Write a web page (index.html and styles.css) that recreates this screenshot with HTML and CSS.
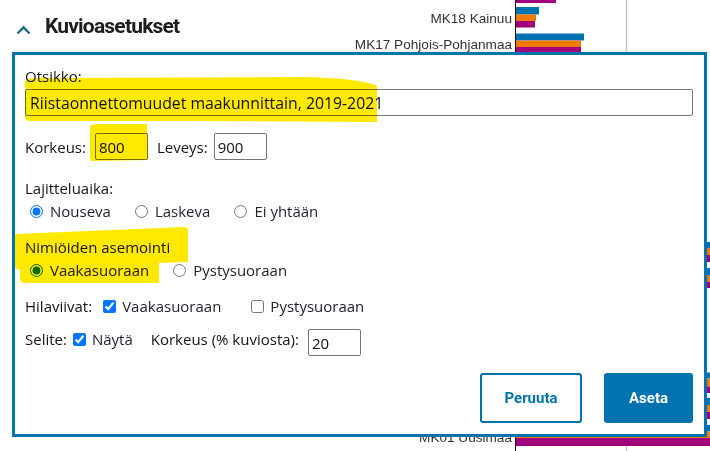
FILE: index.html
```html
<!DOCTYPE html>
<html lang="fi">
<head>
<meta charset="utf-8">
<title>Kuvioasetukset</title>
<link rel="stylesheet" href="styles.css">
</head>
<body>
<div class="page">
  <svg class="chart" width="710" height="451" viewBox="0 0 710 451">
    <line x1="626.5" y1="0" x2="626.5" y2="451" class="grid"/>
    <g class="lbls">
      <text x="512" y="22.5">MK18 Kainuu</text>
      <text x="512" y="48.5">MK17 Pohjois-Pohjanmaa</text>
      <text x="512" y="442">MK01 Uusimaa</text>
    </g>
    <rect class="b3" x="516" y="0" width="40" height="3"/>
    <rect class="b1" x="516" y="7" width="23" height="7.5"/>
    <rect class="b2" x="516" y="14.5" width="20" height="6.5"/>
    <rect class="b3" x="516" y="21" width="19" height="6.5"/>
    <rect class="b1" x="516" y="33.5" width="68" height="7"/>
    <rect class="b2" x="516" y="40.5" width="65" height="6.5"/>
    <rect class="b3" x="516" y="47" width="65" height="6.5"/>
    <rect class="b1" x="516" y="242" width="200" height="6"/>
    <rect class="b2" x="516" y="248" width="200" height="7"/>
    <rect class="b3" x="516" y="255" width="200" height="7"/>
    <rect class="b1" x="516" y="268" width="200" height="7"/>
    <rect class="b2" x="516" y="275" width="200" height="7"/>
    <rect class="b3" x="516" y="282" width="200" height="6"/>
    <rect class="b1" x="516" y="372.5" width="200" height="6"/>
    <rect class="b2" x="516" y="378.5" width="200" height="8"/>
    <rect class="b3" x="516" y="386.5" width="200" height="6.5"/>
    <rect class="b1" x="516" y="398" width="200" height="7"/>
    <rect class="b2" x="516" y="405" width="200" height="7"/>
    <rect class="b3" x="516" y="412" width="200" height="7"/>
    <rect class="b1" x="516" y="425" width="200" height="6.5"/>
    <rect class="b2" x="516" y="431.5" width="200" height="6.5"/>
    <rect class="b3" x="516" y="438" width="200" height="8"/>
    <line x1="515.5" y1="0" x2="515.5" y2="451" class="axis"/>
  </svg>

  <header class="section-head">
    <svg class="chev" width="15" height="10" viewBox="0 0 15 10"><polyline points="1.5,8.5 7.5,2.3 13.5,8.5"/></svg>
    <h2 class="section-title">Kuvioasetukset</h2>
  </header>

  <div class="dialog">
    <label class="lbl">Otsikko:</label>
    <input class="txt title-input" type="text" value="Riistaonnettomuudet maakunnittain, 2019-2021">

    <div class="row dims">
      <span class="lbl">Korkeus:</span>
      <input class="txt num first-num" type="text" value="800">
      <span class="lbl leveys">Leveys:</span>
      <input class="txt num" type="text" value="900">
    </div>

    <div class="lbl sort-lbl">Lajitteluaika:</div>
    <div class="row opts">
      <label class="opt"><input type="radio" name="sort" checked><span>Nouseva</span></label>
      <label class="opt"><input type="radio" name="sort"><span>Laskeva</span></label>
      <label class="opt"><input type="radio" name="sort"><span>Ei yhtään</span></label>
    </div>

    <div class="lbl pos-lbl">Nimiöiden asemointi</div>
    <div class="row opts">
      <label class="opt"><input type="radio" name="pos" checked><span>Vaakasuoraan</span></label>
      <label class="opt"><input type="radio" name="pos"><span>Pystysuoraan</span></label>
    </div>

    <div class="row grid-row">
      <span class="lbl">Hilaviivat:</span>
      <label class="chk first"><input type="checkbox" checked><span>Vaakasuoraan</span></label>
      <label class="chk second"><input type="checkbox"><span>Pystysuoraan</span></label>
    </div>

    <div class="row legend-row">
      <span class="lbl">Selite:</span>
      <label class="chk legend"><input type="checkbox" checked><span>Näytä</span></label>
      <span class="lbl legend-h">Korkeus (% kuviosta):</span>
      <input class="txt num legend-num" type="text" value="20">
    </div>

    <div class="actions">
      <button class="btn ghost" type="button">Peruuta</button>
      <button class="btn primary" type="button">Aseta</button>
    </div>
  </div>

  <svg class="marks" width="710" height="451" viewBox="0 0 710 451">
    <path d="M25,81 Q26,78 40,78 L300,77 Q360,78 377,86 L377,122 L200,121 L30,121 Q25,121 25,116 Z"/>
    <path d="M90,126 Q90,124 100,124 L147,124 L148,160 L92,161 Q90,161 90,157 Z"/>
    <path d="M15,234 L185,227 Q188,227 188,232 L188,262 L159,263 L159,283 L24,283 Q20,283 20,278 L20,270 L15,268 Z"/>
  </svg>
</div>
</body>
</html>
```

FILE: styles.css
```css
* {
  box-sizing: border-box;
}

html,
body {
  margin: 0;
  padding: 0;
  background: #ffffff;
}

body {
  font-family: "Open Sans", "Liberation Sans", sans-serif;
  overflow: hidden;
}

.page {
  position: relative;
  width: 710px;
  height: 451px;
  overflow: hidden;
}

/* background chart */
.chart {
  position: absolute;
  left: 0;
  top: 0;
}

.chart .grid {
  stroke: #c4c4c4;
  stroke-width: 1.5;
}

.chart .axis {
  stroke: #111111;
  stroke-width: 1;
}

.chart .lbls text {
  font-family: "Liberation Sans", Arial, sans-serif;
  font-size: 13.6px;
  fill: #333333;
  text-anchor: end;
}

.chart .b1 { fill: #0072b2; }
.chart .b2 { fill: #ee7a00; }
.chart .b3 { fill: #a3007d; }

/* section header */
.section-head {
  position: relative;
  display: flex;
  align-items: flex-start;
  gap: 14px;
  padding: 14px 0 0 16px;
}

.chev {
  margin-top: 11px;
}

.chev polyline {
  fill: none;
  stroke: #1f6e86;
  stroke-width: 2.4;
  stroke-linecap: butt;
  stroke-linejoin: miter;
}

.section-title {
  margin: 0;
  font-family: Roboto, "Liberation Sans", sans-serif;
  font-weight: 700;
  font-size: 21px;
  line-height: 24px;
  letter-spacing: -0.8px;
  color: #1e1e1e;
}

/* dialog */
.dialog {
  position: absolute;
  left: 12px;
  top: 52px;
  width: 695px;
  height: 385px;
  border: 3px solid #0073b0;
  background: #ffffff;
  padding: 11px 11px 11px 10px;
  color: #1a1a1a;
  font-size: 15px;
  line-height: 20px;
}

.lbl {
  display: block;
  color: #141414;
}

.row {
  display: flex;
  align-items: center;
}

.txt {
  font-family: "Open Sans", "Liberation Sans", sans-serif;
  font-size: 15px;
  color: #111111;
  height: 27px;
  border: 1px solid #767676;
  border-radius: 2px;
  padding: 0 3px;
  background: #ffffff;
  outline: none;
}

.title-input {
  display: block;
  width: 100%;
  margin-top: 3px;
  font-size: 15.8px;
  padding: 0 4px;
}

.dims {
  margin-top: 17px;
}

.num {
  width: 53px;
  margin-left: 6px;
}

.first-num {
  margin-left: 9px;
}

.leveys {
  margin-left: 9px;
}

.sort-lbl {
  margin-top: 18px;
}

.opts {
  margin-top: 3px;
  height: 20px;
}

.pos-lbl {
  margin-top: 16px;
}

.opt,
.chk {
  display: inline-flex;
  align-items: center;
  height: 20px;
  color: #25222f;
}

.opt {
  margin-right: 19px;
}

.opt input {
  width: 13px;
  height: 13px;
  margin: 0 7px 0 5px;
}

.chk input {
  width: 13px;
  height: 13px;
  margin: 0 6px 0 0;
}

.grid-row {
  margin-top: 16px;
  height: 20px;
}

.chk.first {
  margin-left: 11px;
}

.chk.second {
  margin-left: 30px;
}

.legend-row {
  margin-top: 13px;
  align-items: flex-start;
  height: 27px;
}

.chk.legend {
  margin-left: 6px;
}

.legend-h {
  margin-left: 18px;
}

.legend-num {
  margin-left: 9px;
}

.actions {
  display: flex;
  justify-content: flex-end;
  gap: 22px;
  margin-top: 17px;
}

.btn {
  height: 50px;
  font-family: Roboto, "Liberation Sans", sans-serif;
  font-weight: 700;
  font-size: 15px;
  border-radius: 3px;
  cursor: pointer;
}

.ghost {
  width: 102px;
  border: 2px solid #0073b0;
  color: #0073b0;
  background: #ffffff;
}

.primary {
  width: 89px;
  border: 0;
  background: #0073b0;
  color: #ffffff;
}

/* highlighter annotation */
.marks {
  position: absolute;
  left: 0;
  top: 0;
  pointer-events: none;
  mix-blend-mode: multiply;
}

.marks path {
  fill: #ffe900;
}
```
